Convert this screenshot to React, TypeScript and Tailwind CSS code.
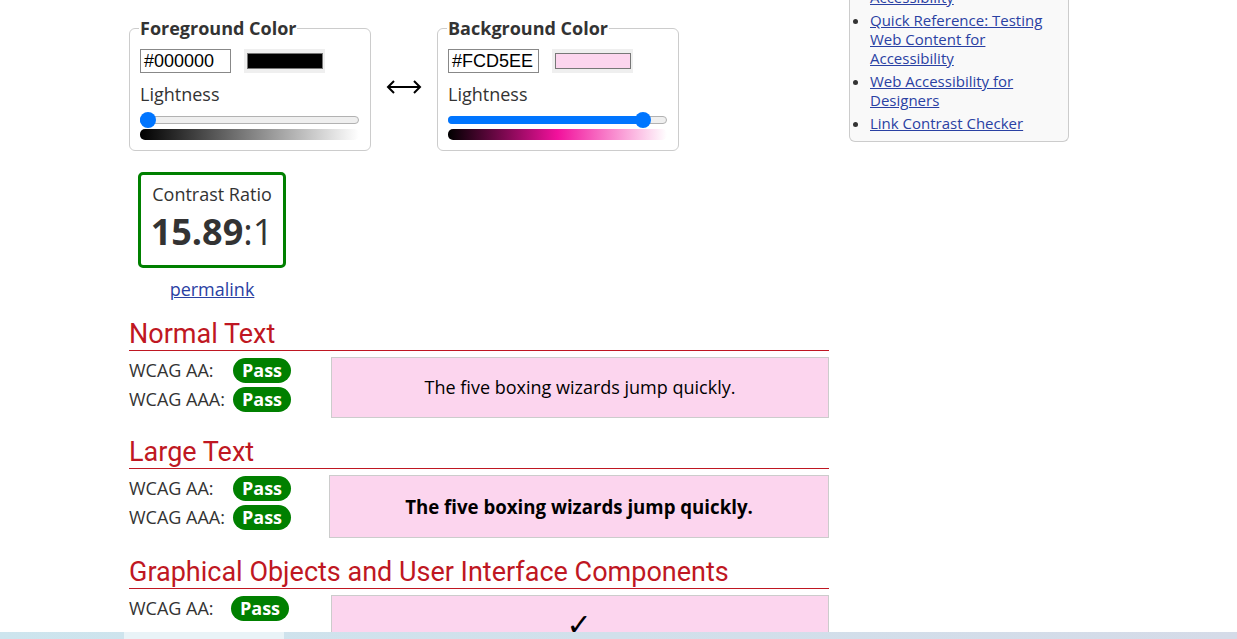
import React from "react";

const sans = "font-['Open_Sans',sans-serif]";
const LINK = "text-[#2a41a3] underline";

const ColorPicker = ({
  legend,
  hex,
  swatch,
  thumb,
  gradient,
}: {
  legend: string;
  hex: string;
  swatch: string;
  thumb: number;
  gradient: string;
}) => (
  <fieldset className="w-[242px] rounded-[6px] border border-[#cccccc] pl-[10px] pr-[11px] pt-[9px] pb-[10px]">
    <legend className="-ml-[1px] px-[1px] text-[18px] leading-[24px] font-bold text-[#333]">{legend}</legend>
    <div className="flex items-center gap-[13px]">
      <div className="h-[24px] w-[91px] border border-[#888] bg-white pl-[3px] font-['Liberation_Sans',Arial,sans-serif] text-[18px] leading-[22px] text-black">
        {hex}
      </div>
      <div className="h-[24px] w-[81px] bg-[#efefef] pt-[4px] pl-[3px] pr-[2px] pb-[4px]">
        <div className="h-full w-full border border-[#777]" style={{ background: swatch }} />
      </div>
    </div>
    <div className="mt-[9px] text-[18px] leading-[24px] text-[#333]">Lightness</div>
    <div className="relative mt-[6px] h-[16px]">
      <div className="absolute left-0 right-0 top-[4px] h-[8px] rounded-full border border-[#b2b2b2] bg-[#efefef]" />
      <div
        className="absolute left-0 top-[4px] h-[8px] rounded-full bg-[#0075ff]"
        style={{ width: thumb + 8 }}
      />
      <div className="absolute top-0 h-[16px] w-[16px] rounded-full bg-[#0075ff]" style={{ left: thumb }} />
    </div>
    <div className="mt-[1px] h-[11px] rounded-[5px]" style={{ background: gradient }} />
  </fieldset>
);

const Badge = () => (
  <span className="flex h-[25px] w-[58px] items-center justify-center rounded-full bg-[#008000] text-[18px] font-bold text-white">
    Pass
  </span>
);

const Section = ({ title }: { title: string }) => (
  <h2 className="border-b border-[#bf1722] font-['Roboto',sans-serif] text-[27px] leading-[32px] text-[#bf1722]">
    {title}
  </h2>
);

const Rows = ({ labels, labelW }: { labels: string[]; labelW: string }) => (
  <div className="flex flex-col gap-[4px] pt-[1px]">
    {labels.map((l) => (
      <div key={l} className="flex h-[25px] items-center">
        <span className={`${labelW} text-[18px] text-[#333]`}>{l}</span>
        <Badge />
      </div>
    ))}
  </div>
);

export default function App() {
  return (
    <div className={`relative h-[639px] overflow-hidden bg-white ${sans}`}>
      <div className="flex gap-[20px] pl-[129px]">
        {/* main column */}
        <div className="w-[700px] pt-[16px]">
          <div className="flex items-start">
            <ColorPicker
              legend="Foreground Color"
              hex="#000000"
              swatch="#000000"
              thumb={0}
              gradient="linear-gradient(to right, #000000, #808080, #ffffff)"
            />
            <div className="flex w-[66px] justify-center pt-[64px]">
              <svg width="36" height="14" viewBox="0 0 36 14" fill="none" stroke="#000" strokeWidth="2">
                <path d="M2 7H34" />
                <path d="M8 1L2 7L8 13" />
                <path d="M28 1L34 7L28 13" />
              </svg>
            </div>
            <ColorPicker
              legend="Background Color"
              hex="#FCD5EE"
              swatch="#FCD5EE"
              thumb={187}
              gradient="linear-gradient(to right, #000000, #f2119c, #ffffff)"
            />
          </div>

          <div className="mt-[21px] w-[166px]">
            <div className="ml-[9px] flex h-[96px] w-[148px] flex-col items-center rounded-[5px] border-[3px] border-[#008000] pt-[7px] text-[#333]">
              <div className="text-[18px] leading-[24px]">Contrast Ratio</div>
              <div className="mt-[8px] text-[36px] leading-[36px]">
                <span className="font-bold">15.89</span>:1
              </div>
            </div>
            <div className="mt-[9px] text-center text-[18px] leading-[24px]">
              <a href="#" className={LINK}>
                permalink
              </a>
            </div>
          </div>

          <div className="mt-[17px]">
            <Section title="Normal Text" />
            <div className="mt-[6px] flex">
              <Rows labels={["WCAG AA:", "WCAG AAA:"]} labelW="w-[104px]" />
              <div className="ml-[40px] flex h-[61px] flex-1 items-center justify-center border border-[#cccccc] bg-[#FCD5EE] text-[18px] text-black">
                The five boxing wizards jump quickly.
              </div>
            </div>
          </div>

          <div className="mt-[18px]">
            <Section title="Large Text" />
            <div className="mt-[6px] flex">
              <Rows labels={["WCAG AA:", "WCAG AAA:"]} labelW="w-[104px]" />
              <div className="ml-[38px] flex h-[63px] flex-1 items-center justify-center border border-[#cccccc] bg-[#FCD5EE] text-[18.67px] font-bold text-black">
                The five boxing wizards jump quickly.
              </div>
            </div>
          </div>

          <div className="mt-[18px]">
            <Section title="Graphical Objects and User Interface Components" />
            <div className="mt-[6px] flex">
              <Rows labels={["WCAG AA:"]} labelW="w-[102px]" />
              <div className="ml-[42px] flex h-[70px] flex-1 justify-center border border-[#cccccc] bg-[#FCD5EE] pt-[14px] pr-[2px] font-['DejaVu_Sans',sans-serif] text-[30px] leading-[30px] text-black">
                ✓
              </div>
            </div>
          </div>
        </div>

        {/* sidebar */}
        <aside className="-mt-[12px] h-[154px] w-[220px] rounded-b-[6px] border border-t-0 border-[#cccccc] bg-[#f9f9f9] pr-[10px]">
          <ul className="list-disc pl-[20px] text-[15px] leading-[19px] marker:text-[#333]">
            <li className="mb-[4px] list-none">
              <a href="#" className={LINK}>Accessibility</a>
            </li>
            <li className="mb-[4px]">
              <a href="#" className={LINK}>Quick Reference: Testing Web Content for Accessibility</a>
            </li>
            <li className="mb-[4px]">
              <a href="#" className={LINK}>Web Accessibility for Designers</a>
            </li>
            <li>
              <a href="#" className={LINK}>Link Contrast Checker</a>
            </li>
          </ul>
        </aside>
      </div>

      {/* bottom bar peeking in */}
      <div className="fixed bottom-0 left-0 right-0 h-[7px] bg-gradient-to-r from-[#cde5ee] to-[#d5dbe8]">
        <div className="absolute left-[124px] top-0 h-full w-[160px] bg-[#e9f3f7]" />
      </div>
    </div>
  );
}
